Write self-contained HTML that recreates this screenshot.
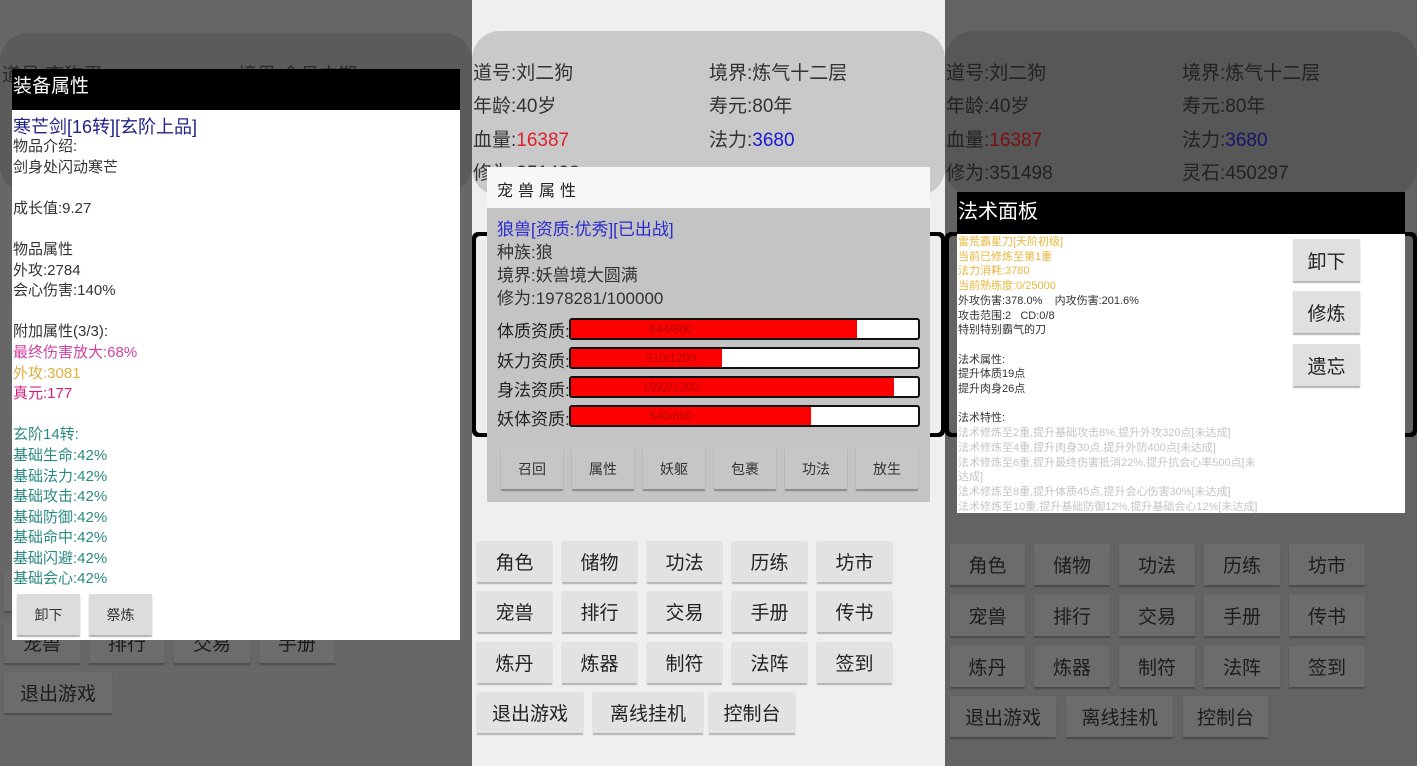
<!DOCTYPE html>
<html><head><meta charset="utf-8"><style>
*{margin:0;padding:0;box-sizing:border-box}
body{width:1417px;height:766px;overflow:hidden;position:relative;font-family:"Liberation Sans","Noto Sans CJK SC",sans-serif;background:#666}
.a{position:absolute}
.p{position:absolute;top:0;height:766px;width:472px;overflow:hidden}
.t{position:absolute;white-space:nowrap}
.b{position:absolute;height:41px;display:flex;align-items:center;justify-content:center;font-size:19px;box-shadow:0 2px 1px rgba(0,0,0,.25)}
.mb .b{background:#e2e2e2;color:#222}
.db .b{background:#6c6c6c;color:#1c1c1c}
.ln{font-size:15px;line-height:20.6px;color:#333}
.sl{font-size:11px;line-height:14.7px;color:#333}
.bar{position:absolute;left:97px;width:351px;height:22px;border:2px solid #111;border-radius:3px;background:#fff;overflow:hidden}
.bar i{position:absolute;left:0;top:0;bottom:0;background:#f00}
.bar span{position:absolute;left:0;width:200px;text-align:center;top:2px;font-size:12px;color:#b00000}
.lb{position:absolute;left:25px;font-size:17px;color:#222}
.pb{position:absolute;top:288px;width:62px;height:41px;background:#c6c6c6;box-shadow:0 2px 1px rgba(0,0,0,.3);display:flex;align-items:center;justify-content:center;font-size:14px;color:#333}
</style></head><body>

<!-- LEFT -->
<div class="p db" style="left:0;background:#676767">
  <div class="a" style="left:0;top:33px;width:472px;height:160px;background:#5b5b5b;border-radius:28px"></div>
  <div class="t" style="left:2px;top:60px;font-size:19px;color:#2a2a2a">道号:李狗蛋</div>
  <div class="t" style="left:238px;top:60px;font-size:19px;color:#2a2a2a">境界:金丹中期</div>
  <div class="b" style="left:4px;top:570px;width:76px">角色</div>
  <div class="b" style="left:4px;top:622px;width:76px">宠兽</div>
  <div class="b" style="left:89px;top:622px;width:76px">排行</div>
  <div class="b" style="left:174px;top:622px;width:76px">交易</div>
  <div class="b" style="left:259px;top:622px;width:76px">手册</div>
  <div class="b" style="left:4px;top:672px;width:108px">退出游戏</div>
  <div class="a" style="left:12px;top:69px;width:448px;height:41px;background:#000"></div>
  <div class="t" style="left:13px;top:71px;font-size:19px;color:#fff">装备属性</div>
  <div class="a" style="left:12px;top:110px;width:448px;height:530px;background:#fff"></div>
  <div class="t" style="left:13px;top:113px;font-size:18px;color:#22228a">寒芒剑[16转][玄阶上品]</div>
  <div class="t ln" style="left:13px;top:137px">物品介绍:<br>剑身处闪动寒芒<br><br>成长值:9.27<br><br>物品属性<br>外攻:2784<br>会心伤害:140%<br><br>附加属性(3/3):<br><span style="color:#d03fa0">最终伤害放大:68%</span><br><span style="color:#e0b040">外攻:3081</span><br><span style="color:#d02080">真元:177</span><br><br><span style="color:#2a8a80">玄阶14转:<br>基础生命:42%<br>基础法力:42%<br>基础攻击:42%<br>基础防御:42%<br>基础命中:42%<br>基础闪避:42%<br>基础会心:42%</span></div>
  <div class="a" style="left:17px;top:594px;width:63px;height:41px;background:#dcdcdc;box-shadow:0 2px 1px rgba(0,0,0,.3);font-size:14px;color:#333;display:flex;align-items:center;justify-content:center">卸下</div>
  <div class="a" style="left:89px;top:594px;width:63px;height:41px;background:#dcdcdc;box-shadow:0 2px 1px rgba(0,0,0,.3);font-size:14px;color:#333;display:flex;align-items:center;justify-content:center">祭炼</div>
</div>

<!-- MIDDLE -->
<div class="p mb" style="left:472px;width:473px;background:#efefef">
  <div class="a" style="left:0;top:31px;width:473px;height:165px;background:#c9c9c9;border-radius:28px"></div>
  <div class="t" style="left:1px;top:58px;font-size:19px;color:#333">道号:刘二狗</div>
  <div class="t" style="left:237px;top:58px;font-size:19px;color:#333">境界:炼气十二层</div>
  <div class="t" style="left:1px;top:91px;font-size:19px;color:#333">年龄:40岁</div>
  <div class="t" style="left:237px;top:91px;font-size:19px;color:#333">寿元:80年</div>
  <div class="t" style="left:1px;top:125px;font-size:19px;color:#333">血量:<span style="color:#e0202a">16387</span></div>
  <div class="t" style="left:237px;top:125px;font-size:19px;color:#333">法力:<span style="color:#1a1ad0">3680</span></div>
  <div class="t" style="left:1px;top:158px;font-size:19px;color:#333">修为:351498</div>
  <div class="a" style="left:0;top:232px;width:473px;height:205px;background:#000;border-radius:6px"></div>
  <div class="a" style="left:4px;top:236px;width:465px;height:197px;background:#eee;border-radius:4px"></div>
  <div class="a" style="left:15px;top:167px;width:443px;height:41px;background:#f7f7f7"></div>
  <div class="t" style="left:25px;top:177px;font-size:16px;color:#222;letter-spacing:5px">宠兽属性</div>
  <div class="a" style="left:15px;top:208px;width:443px;height:294px;background:#c4c4c4">
    <div class="t" style="left:10px;top:10px;font-size:17px;line-height:23px;color:#333"><span style="color:#2a2ad0">狼兽[资质:优秀][已出战]</span><br>种族:狼<br>境界:妖兽境大圆满<br>修为:1978281/100000</div>
    <div class="lb" style="left:10px;top:109px">体质资质:</div>
    <div class="bar" style="left:82px;top:110px"><i style="width:286px"></i><span>644/800</span></div>
    <div class="lb" style="left:10px;top:139px">妖力资质:</div>
    <div class="bar" style="left:82px;top:139px"><i style="width:151px"></i><span>510/1200</span></div>
    <div class="lb" style="left:10px;top:168px">身法资质:</div>
    <div class="bar" style="left:82px;top:168px"><i style="width:323px"></i><span>1092/1200</span></div>
    <div class="lb" style="left:10px;top:197px">妖体资质:</div>
    <div class="bar" style="left:82px;top:197px"><i style="width:240px"></i><span>540/800</span></div>
  </div>
  <div class="pb" style="left:29px;top:448px">召回</div>
  <div class="pb" style="left:100px;top:448px">属性</div>
  <div class="pb" style="left:171px;top:448px">妖躯</div>
  <div class="pb" style="left:242px;top:448px">包裹</div>
  <div class="pb" style="left:313px;top:448px">功法</div>
  <div class="pb" style="left:384px;top:448px">放生</div>
  <div class="b" style="left:5px;top:541px;width:75px">角色</div>
  <div class="b" style="left:90px;top:541px;width:75px">储物</div>
  <div class="b" style="left:175px;top:541px;width:75px">功法</div>
  <div class="b" style="left:260px;top:541px;width:75px">历练</div>
  <div class="b" style="left:345px;top:541px;width:75px">坊市</div>
  <div class="b" style="left:5px;top:591px;width:75px">宠兽</div>
  <div class="b" style="left:90px;top:591px;width:75px">排行</div>
  <div class="b" style="left:175px;top:591px;width:75px">交易</div>
  <div class="b" style="left:260px;top:591px;width:75px">手册</div>
  <div class="b" style="left:345px;top:591px;width:75px">传书</div>
  <div class="b" style="left:5px;top:642px;width:75px">炼丹</div>
  <div class="b" style="left:90px;top:642px;width:75px">炼器</div>
  <div class="b" style="left:175px;top:642px;width:75px">制符</div>
  <div class="b" style="left:260px;top:642px;width:75px">法阵</div>
  <div class="b" style="left:345px;top:642px;width:75px">签到</div>
  <div class="b" style="left:5px;top:692px;width:106px">退出游戏</div>
  <div class="b" style="left:121px;top:692px;width:110px">离线挂机</div>
  <div class="b" style="left:237px;top:692px;width:86px">控制台</div>
</div>

<!-- RIGHT -->
<div class="p db" style="left:945px;background:#636363">
  <div class="a" style="left:0;top:31px;width:472px;height:165px;background:#575757;border-radius:28px"></div>
  <div class="t" style="left:1px;top:58px;font-size:19px;color:#222">道号:刘二狗</div>
  <div class="t" style="left:237px;top:58px;font-size:19px;color:#222">境界:炼气十二层</div>
  <div class="t" style="left:1px;top:91px;font-size:19px;color:#222">年龄:40岁</div>
  <div class="t" style="left:237px;top:91px;font-size:19px;color:#222">寿元:80年</div>
  <div class="t" style="left:1px;top:125px;font-size:19px;color:#222">血量:<span style="color:#7a1010">16387</span></div>
  <div class="t" style="left:237px;top:125px;font-size:19px;color:#222">法力:<span style="color:#15156a">3680</span></div>
  <div class="t" style="left:1px;top:158px;font-size:19px;color:#222">修为:351498</div>
  <div class="t" style="left:237px;top:158px;font-size:19px;color:#222">灵石:450297</div>
  <div class="a" style="left:0;top:232px;width:472px;height:205px;background:#000;border-radius:6px"></div>
  <div class="a" style="left:4px;top:236px;width:464px;height:197px;background:#636363;border-radius:4px"></div>
  <div class="b" style="left:5px;top:544px;width:75px">角色</div>
  <div class="b" style="left:89px;top:544px;width:76px">储物</div>
  <div class="b" style="left:174px;top:544px;width:76px">功法</div>
  <div class="b" style="left:259px;top:544px;width:76px">历练</div>
  <div class="b" style="left:344px;top:544px;width:76px">坊市</div>
  <div class="b" style="left:5px;top:595px;width:75px">宠兽</div>
  <div class="b" style="left:89px;top:595px;width:76px">排行</div>
  <div class="b" style="left:174px;top:595px;width:76px">交易</div>
  <div class="b" style="left:259px;top:595px;width:76px">手册</div>
  <div class="b" style="left:344px;top:595px;width:76px">传书</div>
  <div class="b" style="left:5px;top:646px;width:75px">炼丹</div>
  <div class="b" style="left:89px;top:646px;width:76px">炼器</div>
  <div class="b" style="left:174px;top:646px;width:76px">制符</div>
  <div class="b" style="left:259px;top:646px;width:76px">法阵</div>
  <div class="b" style="left:344px;top:646px;width:76px">签到</div>
  <div class="b" style="left:5px;top:696px;width:106px">退出游戏</div>
  <div class="b" style="left:121px;top:696px;width:107px">离线挂机</div>
  <div class="b" style="left:238px;top:696px;width:85px">控制台</div>
  <div class="a" style="left:12px;top:192px;width:448px;height:42px;background:#000"></div>
  <div class="t" style="left:13px;top:195px;font-size:20px;color:#fff">法术面板</div>
  <div class="a" style="left:12px;top:234px;width:448px;height:279px;background:#fff"></div>
  <div class="t sl" style="left:13px;top:235px"><span style="color:#e8b840">雷荒霸星刀[天阶初级]<br>当前已修炼至第1重<br>法力消耗:3780<br>当前熟练度:0/25000</span><br>外攻伤害:378.0%&nbsp;&nbsp;&nbsp;&nbsp;内攻伤害:201.6%<br>攻击范围:2&nbsp;&nbsp;&nbsp;CD:0/8<br>特别特别霸气的刀<br><br>法术属性:<br>提升体质19点<br>提升肉身26点<br><br>法术特性:<br><span style="color:#c4c4c4">法术修炼至2重,提升基础攻击8%,提升外攻320点[未达成]<br>法术修炼至4重,提升肉身30点,提升外防400点[未达成]<br>法术修炼至6重,提升最终伤害抵消22%,提升抗会心率500点[未<br>达成]<br>法术修炼至8重,提升体质45点,提升会心伤害30%[未达成]<br>法术修炼至10重,提升基础防御12%,提升基础会心12%[未达成]</span></div>
  <div class="a" style="left:348px;top:239px;width:67px;height:42px;background:#e0e0e0;box-shadow:0 2px 1px rgba(0,0,0,.3);display:flex;align-items:center;justify-content:center;font-size:19px;color:#222">卸下</div>
  <div class="a" style="left:348px;top:291px;width:67px;height:42px;background:#e0e0e0;box-shadow:0 2px 1px rgba(0,0,0,.3);display:flex;align-items:center;justify-content:center;font-size:19px;color:#222">修炼</div>
  <div class="a" style="left:348px;top:344px;width:67px;height:42px;background:#e0e0e0;box-shadow:0 2px 1px rgba(0,0,0,.3);display:flex;align-items:center;justify-content:center;font-size:19px;color:#222">遗忘</div>
</div>
</body></html>
